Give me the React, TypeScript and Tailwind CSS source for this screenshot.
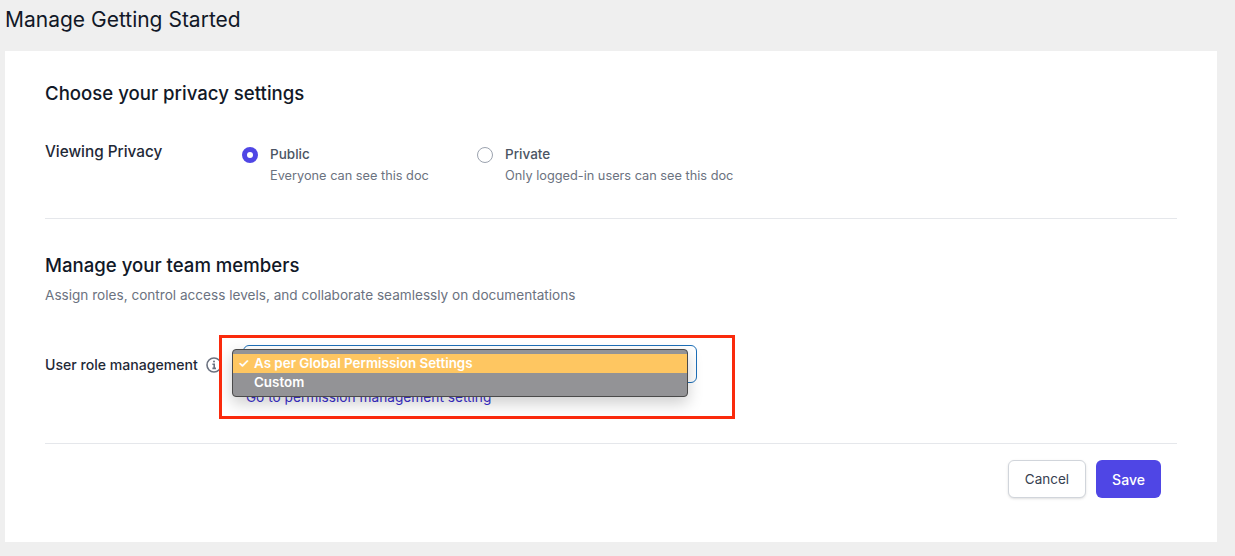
import React from "react"

function Radio({ checked, label, hint }: { checked?: boolean; label: string; hint: string }) {
  return (
    <div className="flex items-start">
      {checked ? (
        <div className="mt-[3px] flex h-4 w-4 items-center justify-center rounded-full bg-[#4f46e5]">
          <div className="h-1.5 w-1.5 rounded-full bg-white" />
        </div>
      ) : (
        <div className="mt-[3px] h-4 w-4 rounded-full border border-[#9ca3af] bg-white" />
      )}
      <div className="ml-3">
        <div className="text-[13.5px] leading-5 font-medium text-[#4b5563]">{label}</div>
        <div className="mt-[2px] text-[12.75px] leading-5 text-[#6b7280]">{hint}</div>
      </div>
    </div>
  )
}

export default function App() {
  return (
    <div className="h-[556px] w-[1235px] overflow-hidden bg-[#efefef] font-['Inter',sans-serif]">
      <div className="px-[5px] pt-[7px] text-[21px] leading-[26px] text-[#111827]">Manage Getting Started</div>

      <div className="mx-[5px] mt-[18px] h-[491px] w-[1212px] bg-white px-10 pt-[30px]">
        <h2 className="text-[18.6px] leading-6 font-medium text-[#111827]">Choose your privacy settings</h2>

        <div className="mt-[39px] flex">
          <div className="w-[197px] text-[15.3px] leading-4 font-medium text-[#1f2937]">Viewing Privacy</div>
          <div className="w-[235px]">
            <Radio checked label="Public" hint="Everyone can see this doc" />
          </div>
          <Radio label="Private" hint="Only logged-in users can see this doc" />
        </div>

        <div className="mt-[32px] h-px bg-[#e5e7eb]" />

        <h2 className="mt-[34px] text-[18.6px] leading-6 font-medium text-[#111827]">Manage your team members</h2>
        <p className="mt-[8px] text-[13.6px] leading-5 text-[#6b7280]">
          Assign roles, control access levels, and collaborate seamlessly on documentations
        </p>

        <div className="relative mt-[40px] flex h-[78px] items-start">
          <div className="mt-[10px] flex items-center">
            <span className="text-[14.1px] leading-5 font-medium text-[#1f2937]">User role management</span>
            <svg className="ml-2 h-4 w-4" viewBox="0 0 16 16" fill="none" stroke="#6b7280" strokeWidth="1.6">
              <circle cx="8" cy="8" r="7" />
              <path d="M6.4 7.2H8.2V11.4M6.4 11.4H10" />
              <circle cx="8" cy="4.6" r="1" fill="#6b7280" stroke="none" />
            </svg>
          </div>

          <div className="ml-[21px]">
            <div className="h-[38px] w-[454px] rounded-md border border-[#1d6fb8] bg-white" />
            <a className="mt-1 ml-[3px] block text-[13.7px] leading-5 text-[#3b30d0]">Go to permission management setting</a>
          </div>

          {/* native select popup */}
          <div className="absolute top-[4px] left-[187px] w-[456px] rounded-[4px] border border-[#4a4a4a] bg-[#939396] py-1 text-[13.4px] leading-[19px] font-semibold text-white shadow-[0_6px_16px_rgba(0,0,0,0.2)]">
            <div className="flex h-[19px] items-center bg-[#fec661]">
              <span className="w-[21px] pl-[5px] text-[13px]">✓</span>
              As per Global Permission Settings
            </div>
            <div className="flex h-[19px] items-center pl-[21px]">Custom</div>
          </div>

          {/* annotation */}
          <div className="absolute top-[-10px] left-[174px] h-[84px] w-[516px] border-[3px] border-[#fa2a0c]" />
        </div>

        <div className="mt-[20px] h-px bg-[#e5e7eb]" />

        <div className="mt-4 flex justify-end gap-[10px] pr-4">
          <button className="h-[38px] w-[78px] rounded-md border border-[#d1d5db] bg-white text-[13.5px] text-[#374151] shadow-sm">
            Cancel
          </button>
          <button className="h-[38px] w-[65px] rounded-md bg-[#4f46e5] text-[14px] font-medium text-white">Save</button>
        </div>
      </div>
    </div>
  )
}
